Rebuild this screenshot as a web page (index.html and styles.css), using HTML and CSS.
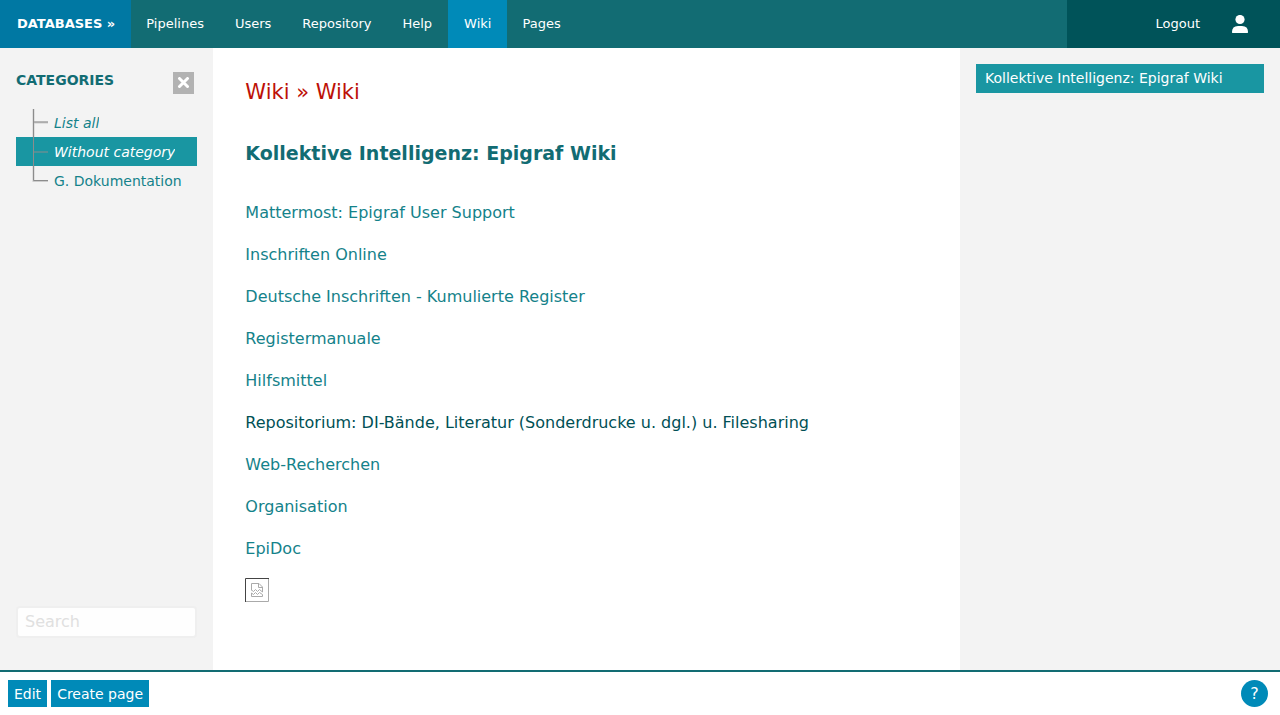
FILE: index.html
```html
<!DOCTYPE html>
<html lang="de">
<head>
<meta charset="utf-8">
<meta name="viewport" content="width=device-width, initial-scale=1">
<title>Wiki</title>
<link rel="stylesheet" href="styles.css">
</head>
<body>
<header class="topbar">
  <nav class="menu">
    <a class="menu-item menu-brand" href="#">DATABASES »</a>
    <a class="menu-item" href="#">Pipelines</a>
    <a class="menu-item" href="#">Users</a>
    <a class="menu-item" href="#">Repository</a>
    <a class="menu-item" href="#">Help</a>
    <a class="menu-item menu-active" href="#">Wiki</a>
    <a class="menu-item" href="#">Pages</a>
  </nav>
  <div class="account">
    <a class="menu-item" href="#">Logout</a>
    <a class="account-link" href="#" aria-label="Account">
      <svg width="16" height="18" viewBox="0 0 16 18" aria-hidden="true"><circle cx="8" cy="4.500" r="4.600"/><path d="M0 17Q0 11 6 11h4Q16 11 16 17q0 1.200-1 1.200H1Q0 18.200 0 17z"/></svg>
    </a>
  </div>
</header>
<div class="columns">
  <aside class="sidebar">
    <div class="sidebar-head">
      <h2 class="sidebar-title">CATEGORIES</h2>
      <button class="close" type="button" aria-label="Close">
        <svg width="13" height="12" viewBox="0 0 13 12" aria-hidden="true"><path d="M2.500 1.500l8 8M10.500 1.500l-8 8"/></svg>
      </button>
    </div>
    <ul class="tree">
      <li class="tree-item"><svg class="branch" viewBox="0 0 16 29" aria-hidden="true"><path class="branch-soft" d="M1.500 1v28M2 14.500h14"/><path d="M1.500 1v28M2 14h14"/></svg><a class="tree-link tree-special" href="#">List all</a></li>
      <li class="tree-item tree-selected"><svg class="branch" viewBox="0 0 16 29" aria-hidden="true"><path d="M1.500 0v29M2 15h14"/></svg><a class="tree-link tree-special" href="#">Without category</a></li>
      <li class="tree-item"><svg class="branch" viewBox="0 0 16 29" aria-hidden="true"><path class="branch-soft" d="M1.500 0v15H16"/><path d="M1.500 0v14.500H16"/></svg><a class="tree-link" href="#">G. Dokumentation</a></li>
    </ul>
    <input class="search" type="search" placeholder="Search" aria-label="Search">
  </aside>
  <main class="content">
    <p class="crumbs"><a href="#">Wiki</a> » <a href="#">Wiki</a></p>
    <h1 class="title">Kollektive Intelligenz: Epigraf Wiki</h1>
    <div class="article">
      <a href="#">Mattermost: Epigraf User Support</a>
      <a href="#">Inschriften Online</a>
      <a href="#">Deutsche Inschriften - Kumulierte Register</a>
      <a href="#">Registermanuale</a>
      <a href="#">Hilfsmittel</a>
      <p>Repositorium: DI-Bände, Literatur (Sonderdrucke u. dgl.) u. Filesharing</p>
      <a href="#">Web-Recherchen</a>
      <a href="#">Organisation</a>
      <a href="#">EpiDoc</a>
      <svg class="missing" width="24" height="24" viewBox="0 0 24 24" role="img" aria-label="Missing image"><path class="edge-light" d="M1 23.500h22.500V1"/><path class="edge-dark" d="M.5 24V.5H24"/><path class="edge-light" d="M6.500 12.500v-7h7.500l3.500 3.500v5M13.500 5.500v4h4M6.500 12l2 1.500 2-2 2 2 2-2 3 2.500M6.500 18.500v-3.500l2 1.500 2-2 2 2 2-2 3 2v2z"/></svg>
    </div>
  </main>
  <aside class="pages">
    <a class="page-link" href="#">Kollektive Intelligenz: Epigraf Wiki</a>
  </aside>
</div>
<footer class="actions">
  <button class="button" type="button">Edit</button>
  <button class="button" type="button">Create page</button>
  <button class="help" type="button" aria-label="Help">?</button>
</footer>
</body>
</html>
```
FILE: styles.css
```css
* { box-sizing: border-box; }

body {
  display: flex;
  flex-direction: column;
  min-height: 100vh;
  margin: 0;
  color: #005055;
  background: #fff;
  font: 16px/26px "DejaVu Sans", sans-serif;
}

a { color: #14828a; text-decoration: none; }
h1, h2, p, ul { margin: 0; padding: 0; }
button { border: 0; padding: 0; color: #fff; font-family: inherit; cursor: pointer; }

.topbar {
  display: flex;
  height: 48px;
  background: #126c73;
}
.menu { display: flex; flex: 1; }
.menu-item {
  display: flex;
  align-items: center;
  padding: 0 16px 0 15px;
  color: #fff;
  font-size: 13px;
}
.menu-brand { padding: 0 16px 0 17px; background: #0078a3; font-weight: bold; }
.menu-active { padding: 0 16px; background: #008ab8; }
.account {
  display: flex;
  justify-content: flex-end;
  width: calc(100% / 6);
  background: #005359;
}
.account-link {
  display: flex;
  align-items: center;
  padding: 0 32px 0 16px;
  fill: #fff;
}

.columns { display: flex; flex: 1; }
.sidebar {
  display: flex;
  flex-direction: column;
  width: calc(100% / 6);
  padding: 24px 16px 32px;
  background: #f3f3f3;
}
.sidebar-head {
  display: flex;
  justify-content: space-between;
  height: 36px;
  padding-right: 3px;
}
.sidebar-title { color: #126c73; font-size: 14px; line-height: 16px; }
.close {
  display: flex;
  align-items: center;
  justify-content: center;
  width: 21px;
  height: 22px;
  background: #b2b2b2;
}
.close path { stroke: #fff; stroke-width: 3; stroke-linecap: round; }
.tree { flex: 1; list-style: none; }
.tree-item {
  display: flex;
  height: 29px;
  padding: 0 14px 0 16px;
  font-size: 14px;
  line-height: 30px;
}
.branch { flex: none; width: 16px; height: 29px; margin-right: 6px; fill: none; stroke: #8c8c8c; }
.branch-soft { stroke: #ccc; stroke-width: 2; }
.tree-link { overflow: hidden; white-space: nowrap; }
.tree-special { font-style: italic; }
.tree-selected { background: #1996a2; }
.tree-selected .tree-link { color: #fff; }
.search {
  width: 100%;
  height: 32px;
  padding: 0 7px 2px;
  border: 2px solid #efefef;
  border-radius: 4px;
  background: #fefefe;
  color: #005055;
  font: inherit;
}
.search::placeholder { color: #e0e0e0; opacity: 1; }

.content { flex: 1; padding: 31px 32px; }
.crumbs { font-size: 21px; }
.crumbs, .crumbs a { color: #bd1107; }
.title { margin-top: 35px; color: #126c73; font-size: 19px; }
.article {
  display: flex;
  flex-direction: column;
  align-items: flex-start;
  gap: 16px;
  margin-top: 34px;
}
.missing { fill: none; }
.edge-light { stroke: #aaa; }
.edge-dark { stroke: #444; }

.pages { width: 25%; padding: 16px; background: #f3f3f3; }
.page-link {
  display: block;
  padding: 0 9px;
  background: #1996a2;
  color: #fff;
  font-size: 14px;
  line-height: 29px;
}

.actions {
  display: flex;
  gap: 4px;
  padding: 8px 12px 8px 8px;
  border-top: 2px solid #126c73;
}
.button { height: 27px; padding: 0 6px; background: #008ab8; font-size: 14px; }
.help {
  width: 27px;
  height: 27px;
  margin-left: auto;
  border-radius: 50%;
  background: #008ab8;
  font-size: 16px;
}
```
